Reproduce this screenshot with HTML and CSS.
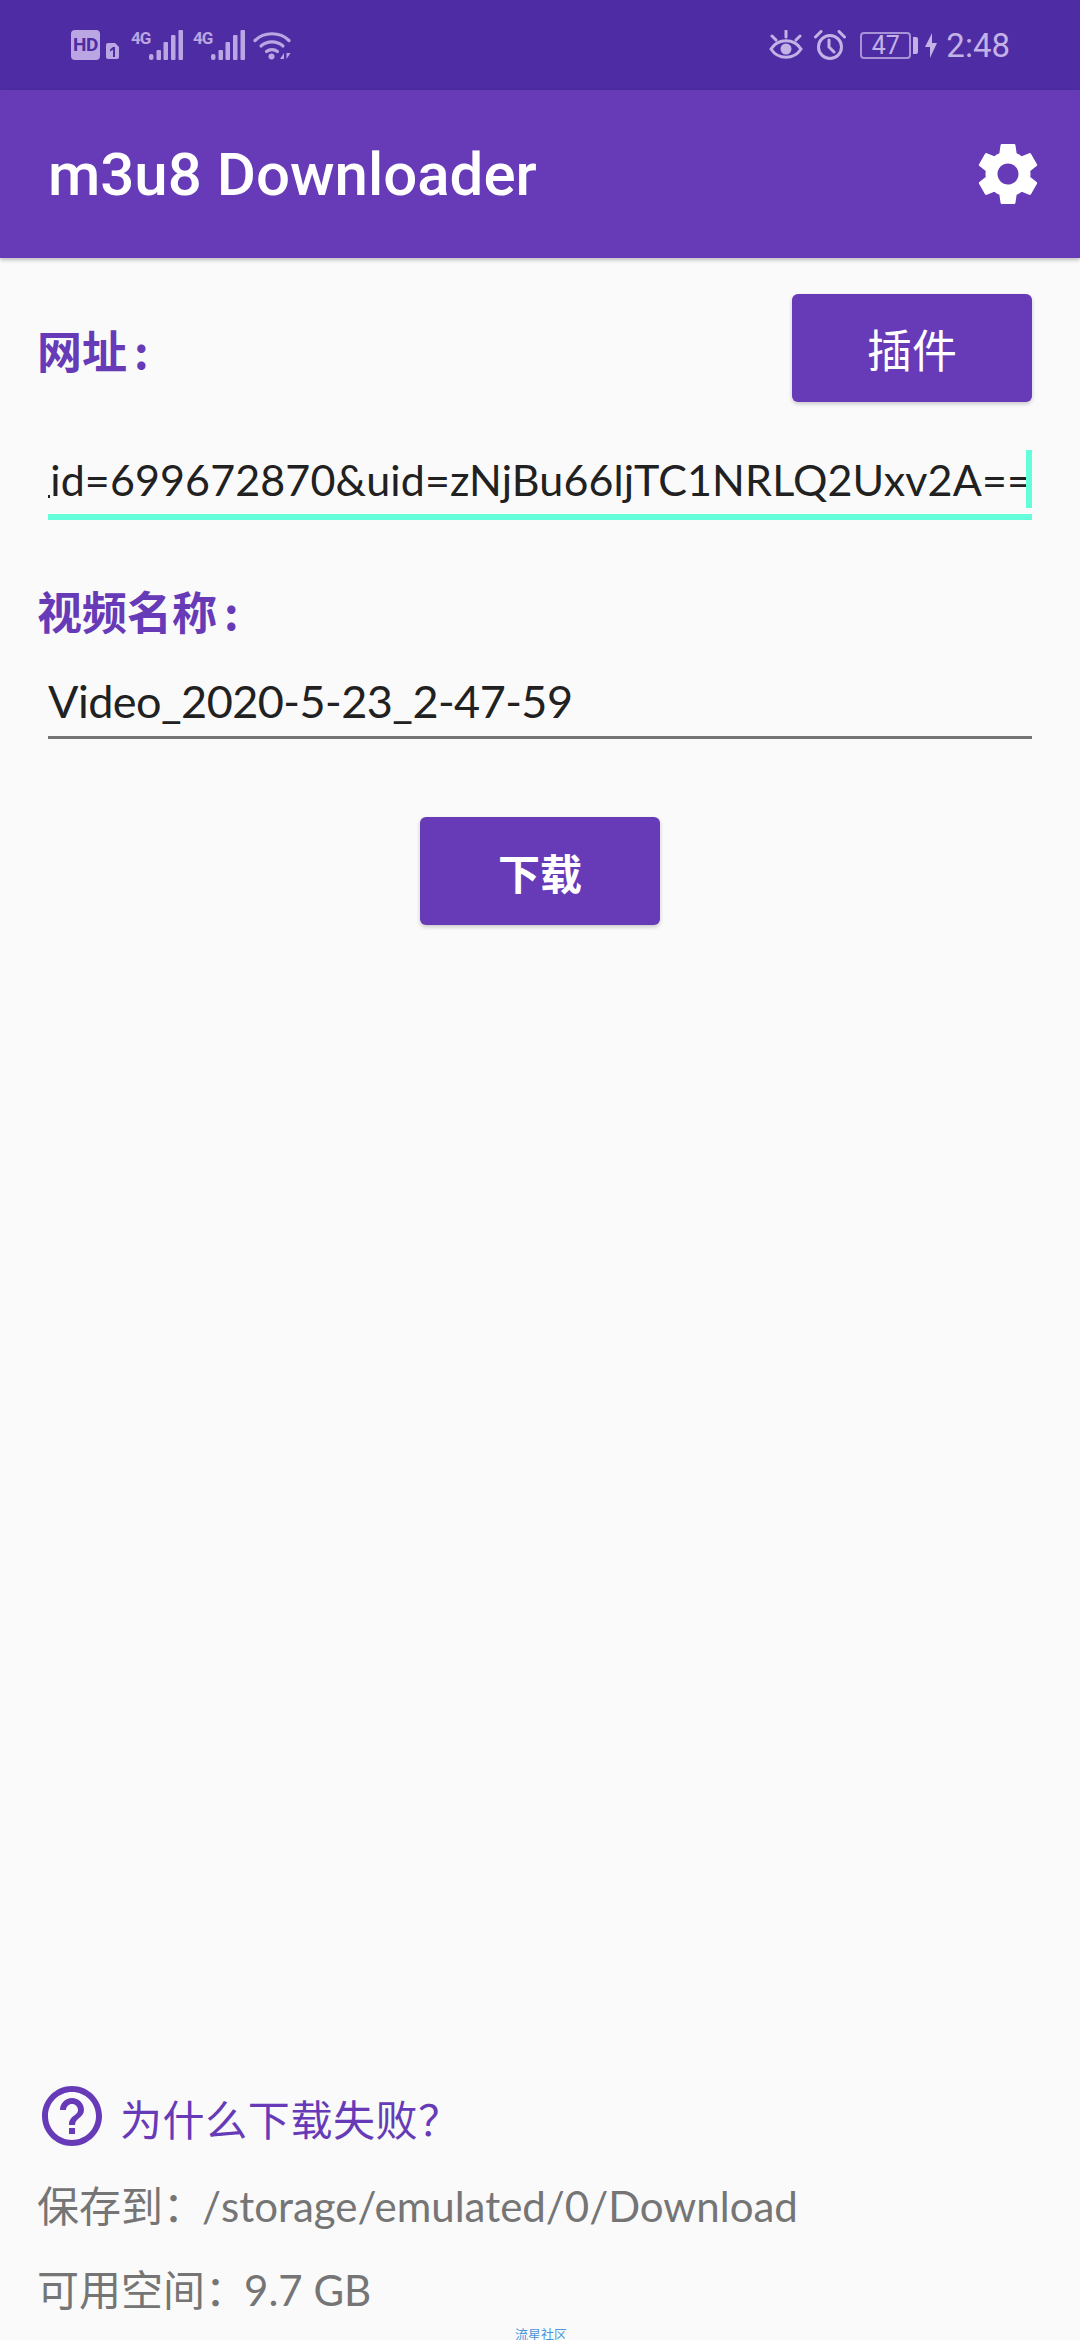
FILE: index.html
```html
<!DOCTYPE html>
<html lang="zh-CN">
<head>
  <meta charset="UTF-8">
  <title>m3u8 Downloader</title>
  <link rel="stylesheet" href="styles.css">
</head>
<body>

  <div class="status">
    <div class="status-left">
      <span class="hd">HD</span>
      <svg class="sim" width="13" height="16" viewBox="0 0 13 16"><path d="M2 0h7l4 4v10a2 2 0 0 1-2 2H2a2 2 0 0 1-2-2V2a2 2 0 0 1 2-2z" fill="#b9a6e2"/><path d="M4 6.500L7 4h2v10H7V6.800L4 8.500z" fill="#4e2ca3"/></svg>
      <span class="net"><span class="net-label">4G</span><svg width="34" height="30" viewBox="0 0 34 30" fill="#b9a6e2"><rect x="0" y="24" width="4.500" height="6" rx="2"/><rect x="7.500" y="20" width="4.500" height="10" rx="1"/><rect x="14.500" y="12" width="4.500" height="18" rx="1"/><rect x="22" y="5" width="4.500" height="25" rx="1"/><rect x="29.500" y="0" width="4.500" height="30" rx="1"/></svg></span>
      <span class="net"><span class="net-label">4G</span><svg width="34" height="30" viewBox="0 0 34 30" fill="#b9a6e2"><rect x="0" y="24" width="4.500" height="6" rx="2"/><rect x="7.500" y="20" width="4.500" height="10" rx="1"/><rect x="14.500" y="12" width="4.500" height="18" rx="1"/><rect x="22" y="5" width="4.500" height="25" rx="1"/><rect x="29.500" y="0" width="4.500" height="30" rx="1"/></svg></span>
      <svg class="wifi" width="38" height="30" viewBox="0 0 38 30" fill="none" stroke="#b9a6e2" stroke-width="3.200" stroke-linecap="round"><path d="M2 10.500C11 1.500 27 1.500 36 10.500"/><path d="M8 16C14 10.500 24 10.500 30 16"/><path d="M13.500 21.500C16.500 19 21.500 19 24.500 21.500"/><circle cx="18.500" cy="26.500" r="3" fill="#b9a6e2" stroke="none"/><path d="M31 23l-4 6h4zM33.500 23v6l4-6z" fill="#b9a6e2" stroke="none"/></svg>
    </div>
    <div class="status-right">
      <svg width="34" height="30" viewBox="0 0 34 30" fill="none" stroke="#c3b2e6" stroke-width="3" stroke-linecap="round"><path d="M2 19C9 8 25 8 32 19C25 30 9 30 2 19z"/><circle cx="17" cy="19" r="5.500" fill="#c3b2e6" stroke="none"/><path d="M17 1v6M3 6l4 4M31 6l-4 4"/></svg>
      <svg class="alarm" width="32" height="30" viewBox="0 0 32 30" fill="none" stroke="#c3b2e6" stroke-width="3" stroke-linecap="round"><circle cx="16" cy="17" r="11.500"/><path d="M15 10v7l5 5M1.500 7L7 1.500M30.500 7L25 1.500"/></svg>
      <span class="battery">47</span>
      <span class="battery-nub"></span>
      <svg class="bolt" width="12" height="25" viewBox="0 0 12 25" fill="#c3b2e6"><path d="M7 0v10h5L5 25V14H0z"/></svg>
      <span class="clock">2:48</span>
    </div>
  </div>

  <div class="appbar">
    <span class="app-title">m3u8 Downloader</span>
    <svg class="gear" width="72" height="72" viewBox="0 0 24 24" fill="#fff"><path d="M19.430 12.980c.04-.32.07-.64.07-.98s-.03-.66-.07-.98l2.110-1.650c.19-.15.24-.42.12-.64l-2-3.460c-.12-.22-.39-.3-.61-.22l-2.490 1c-.52-.4-1.080-.73-1.690-.98l-.38-2.650C14.460 2.180 14.250 2 14 2h-4c-.25 0-.46.18-.49.42l-.38 2.650c-.61.25-1.170.59-1.690.98l-2.490-1c-.23-.09-.49 0-.61.22l-2 3.460c-.13.22-.07.49.12.64l2.110 1.650c-.04.32-.07.65-.07.98s.03.66.07.98l-2.110 1.650c-.19.15-.24.42-.12.64l2 3.460c.12.22.39.3.61.22l2.490-1c.52.4 1.080.73 1.690.98l.38 2.650c.03.24.24.42.49.42h4c.25 0 .46-.18.49-.42l.38-2.650c.61-.25 1.170-.59 1.690-.98l2.490 1c.23.09.49 0 .61-.22l2-3.460c.12-.22.07-.49-.12-.64l-2.110-1.650zM12 15.500c-1.930 0-3.500-1.570-3.500-3.500s1.570-3.500 3.500-3.500 3.500 1.570 3.500 3.500-1.570 3.500-3.500 3.500z"/></svg>
  </div>

  <div class="content">
    <div class="url-head">
      <span class="label">网址<span class="colon">:</span></span>
      <button class="btn">插件</button>
    </div>

    <div class="field field-active">
      <span class="field-text">id=699672870&amp;uid=zNjBu66ljTC1NRLQ2Uxv2A==</span>
      <span class="caret"></span>
    </div>

    <div class="label name-label">视频名称<span class="colon">:</span></div>

    <div class="field field-name">
      <span class="field-text">Video_2020-5-23_2-47-59</span>
    </div>

    <div class="actions">
      <button class="btn btn-bold">下载</button>
    </div>

    <div class="footer">
      <div class="help">
        <svg width="72" height="72" viewBox="0 0 24 24" fill="#673ab7"><path d="M11 18h2v-2h-2v2zm1-16C6.480 2 2 6.480 2 12s4.480 10 10 10 10-4.480 10-10S17.520 2 12 2zm0 18c-4.410 0-8-3.590-8-8s3.590-8 8-8 8 3.590 8 8-3.590 8-8 8zm0-14c-2.210 0-4 1.790-4 4h2c0-1.100.9-2 2-2s2 .9 2 2c0 2-3 1.750-3 5h2c0-2.250 3-2.500 3-5 0-2.210-1.790-4-4-4z"/></svg>
        <span class="help-text">为什么下载失败？</span>
      </div>
      <div class="info"><span class="info-key">保存到：</span>/storage/emulated/0/Download</div>
      <div class="info"><span class="info-key">可用空间：</span>9.7 GB</div>
    </div>
  </div>

  <span class="watermark">流星社区</span>

</body>
</html>
```

FILE: styles.css
```css
* {
  box-sizing: border-box;
}

body {
  margin: 0;
  width: 1080px;
  height: 2340px;
  overflow: hidden;
  position: relative;
  display: flex;
  flex-direction: column;
  background-color: #fafafa;
  font-family: Lato, "Noto Sans CJK SC", sans-serif;
}

.status {
  height: 90px;
  flex: none;
  display: flex;
  justify-content: space-between;
  align-items: center;
  padding: 0 70px 0 71px;
  background-color: #4e2ca3;
}

.status-left,
.status-right {
  display: flex;
  align-items: center;
}

.hd {
  width: 29px;
  height: 30px;
  border-radius: 4px;
  background-color: #b9a6e2;
  color: #4e2ca3;
  font: 700 19px Roboto, sans-serif;
  line-height: 30px;
  letter-spacing: -0.5px;
  text-align: center;
}

.sim {
  margin: 12px 0 0 6px;
}

.net {
  display: flex;
  align-items: flex-start;
  margin-left: 12px;
}

.net-label {
  width: 18px;
  color: #b9a6e2;
  font: 700 17px Roboto, sans-serif;
  line-height: 16px;
  letter-spacing: -1px;
}

.net + .net {
  margin-left: 10px;
}

.wifi {
  margin-left: 8px;
}

.alarm {
  margin-left: 11px;
}

.battery {
  width: 51px;
  height: 27px;
  margin-left: 14px;
  border: 2px solid #a892d8;
  border-radius: 4px;
  color: #c3b2e6;
  font: 400 25px Roboto, sans-serif;
  line-height: 23px;
  text-align: center;
}

.battery-nub {
  width: 5px;
  height: 17px;
  margin-left: 2px;
  background-color: #c3b2e6;
  border-radius: 0 2px 2px 0;
}

.bolt {
  margin-left: 7px;
}

.clock {
  margin-left: 9px;
  color: #c3b2e6;
  font: 400 33px Roboto, sans-serif;
}

.appbar {
  height: 168px;
  flex: none;
  display: flex;
  justify-content: space-between;
  align-items: center;
  padding: 0 36px 0 48px;
  background-color: #673ab7;
  box-shadow: 0 2px 4px rgba(0, 0, 0, 0.25);
  position: relative;
}

.app-title {
  color: #fff;
  font: 500 60px Roboto, sans-serif;
}

.content {
  flex: 1;
  display: flex;
  flex-direction: column;
  padding: 36px 48px 0;
}

.url-head {
  display: flex;
  justify-content: space-between;
  align-items: center;
  margin-left: -11px;
}

.label {
  color: #673ab7;
  font-size: 45px;
  font-weight: 700;
  line-height: 60px;
}

.url-head .label {
  padding-top: 6px;
}

.colon {
  margin-left: 7px;
  font-family: "Noto Sans CJK SC", sans-serif;
}

.btn {
  width: 240px;
  height: 108px;
  border: none;
  border-radius: 6px;
  background-color: #673ab7;
  color: #fff;
  font-family: "Noto Sans CJK SC", sans-serif;
  font-size: 45px;
  box-shadow: 0 2px 4px rgba(0, 0, 0, 0.2);
}

.btn-bold {
  font-size: 42px;
  font-weight: 700;
}

.field {
  display: flex;
  overflow: hidden;
  position: relative;
}

.field-active {
  justify-content: flex-end;
  margin-top: 40px;
  height: 78px;
  border-bottom: 6px solid #64ffda;
}

/* tail of the character scrolled out of the field */
.field-active::before {
  content: "";
  position: absolute;
  left: 0;
  top: 53px;
  width: 2px;
  height: 3px;
  background-color: #212121;
}

.field-name {
  margin-top: 28px;
  height: 68px;
  border-bottom: 3px solid #757575;
}

.field-text {
  flex: none;
  color: #212121;
  font-size: 45px;
  line-height: 60px;
  white-space: nowrap;
}

.field-active .field-text {
  padding-top: 8px;
  font-size: 43px;
  letter-spacing: 0.12px;
}

.field-name .field-text {
  letter-spacing: -0.55px;
}

.caret {
  position: absolute;
  right: 0;
  top: 8px;
  width: 6px;
  height: 58px;
  background-color: #64ffda;
}

.name-label {
  margin: 61px 0 0 -11px;
}

.actions {
  display: flex;
  justify-content: center;
  margin-top: 78px;
}

.footer {
  margin-top: auto;
  margin-left: -11px;
  padding-bottom: 20px;
}

.help {
  display: flex;
  align-items: center;
  margin-left: -1px;
  gap: 12px;
  color: #673ab7;
  font-size: 42px;
  line-height: 60px;
}

.help-text {
  margin-top: 8px;
  letter-spacing: 0.6px;
}

.info {
  margin-top: 24px;
  color: #757575;
  font-size: 42px;
  line-height: 60px;
}

.info-key {
  margin-right: -3px;
}

.watermark {
  position: absolute;
  left: 515px;
  bottom: 0;
  color: #4a97dc;
  font: 400 13px/13px "Noto Sans CJK SC", sans-serif;
}
```
